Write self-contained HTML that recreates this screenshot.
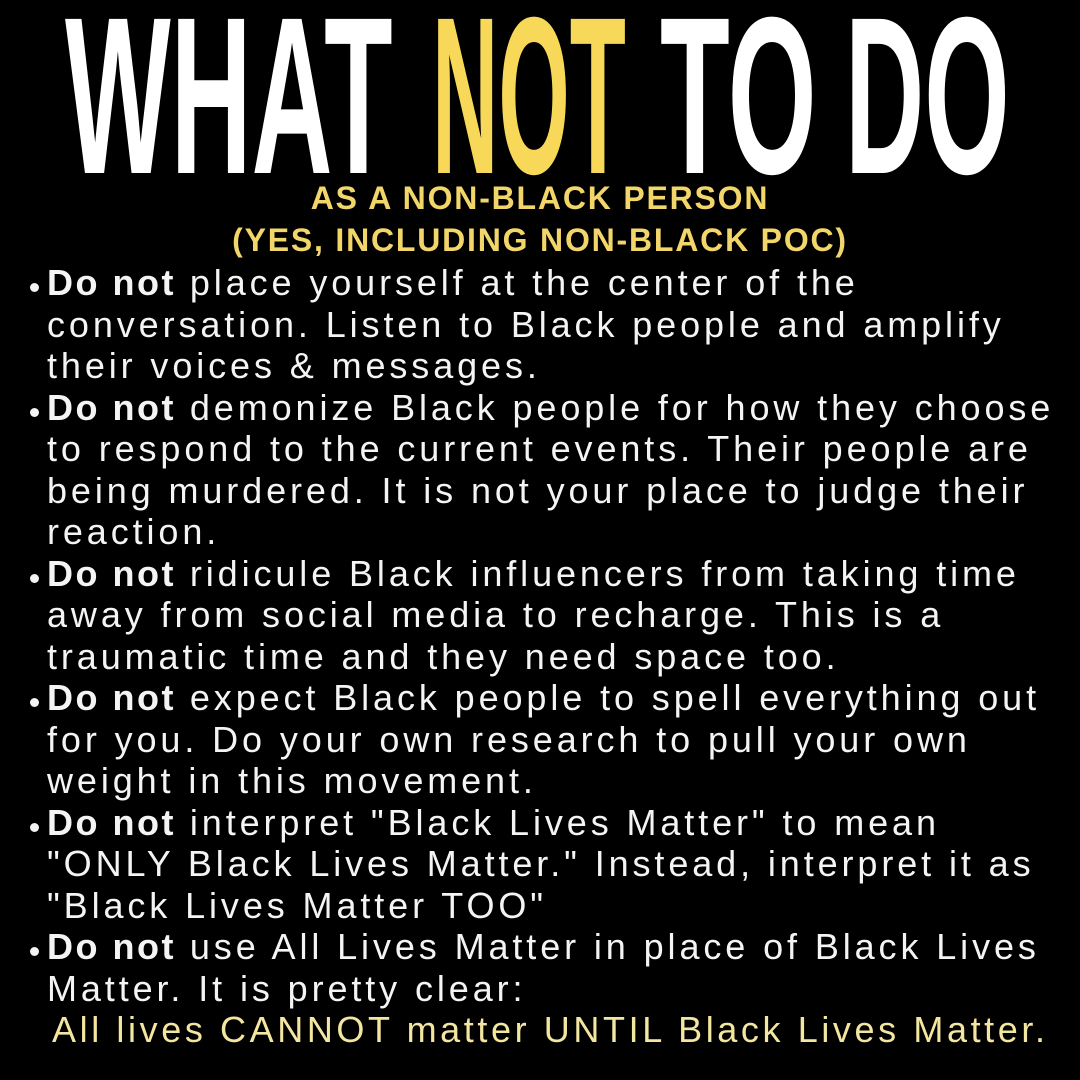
<!DOCTYPE html>
<html><head><meta charset="utf-8"><style>
html,body{margin:0;padding:0;background:#000;}
body{width:1080px;height:1080px;position:relative;overflow:hidden;font-family:"Liberation Sans",sans-serif;}
.t{position:absolute;top:-16px;font-size:224px;line-height:224px;font-weight:bold;color:#fff;transform-origin:0 0;white-space:nowrap;}
.sub{position:absolute;left:0;width:1080px;text-align:center;color:#f2d66a;font-weight:bold;font-size:32px;letter-spacing:1.8px;line-height:42px;}
.body{position:absolute;left:47px;top:262px;color:#f4f4f4;font-size:36px;line-height:41.5px;letter-spacing:3.9px;white-space:nowrap;}
.body div{position:relative;height:41.5px;}
.b::before{content:"";position:absolute;left:-17px;top:21px;width:9px;height:9px;border-radius:50%;background:#f4f4f4;}
strong{font-weight:bold;letter-spacing:2.5px;}
.y{color:#f3e6a0;margin-left:5px;letter-spacing:3.6px;}
</style></head><body>
<div class="t" style="left:65px;transform:scaleX(0.5)">WHAT</div>
<div class="t" style="left:432px;transform:scaleX(0.41);color:#f7d858">NOT</div>
<div class="t" style="left:660px;transform:scaleX(0.51)">TO</div>
<div class="t" style="left:845px;transform:scaleX(0.49)">DO</div>
<div class="sub" style="top:177px">AS A NON-BLACK PERSON</div>
<div class="sub" style="top:219px">(YES, INCLUDING NON-BLACK POC)</div>
<div class="body">
<div class="b"><strong>Do not</strong> place yourself at the center of the</div>
<div>conversation. Listen to Black people and amplify</div>
<div>their voices &amp; messages.</div>
<div class="b"><strong>Do not</strong> demonize Black people for how they choose</div>
<div>to respond to the current events. Their people are</div>
<div>being murdered. It is not your place to judge their</div>
<div>reaction.</div>
<div class="b"><strong>Do not</strong> ridicule Black influencers from taking time</div>
<div>away from social media to recharge. This is a</div>
<div>traumatic time and they need space too.</div>
<div class="b"><strong>Do not</strong> expect Black people to spell everything out</div>
<div>for you. Do your own research to pull your own</div>
<div>weight in this movement.</div>
<div class="b"><strong>Do not</strong> interpret "Black Lives Matter" to mean</div>
<div>"ONLY Black Lives Matter." Instead, interpret it as</div>
<div>"Black Lives Matter TOO"</div>
<div class="b"><strong>Do not</strong> use All Lives Matter in place of Black Lives</div>
<div>Matter. It is pretty clear:</div>
<div class="y">All lives CANNOT matter UNTIL Black Lives Matter.</div>
</div>
</body></html>
